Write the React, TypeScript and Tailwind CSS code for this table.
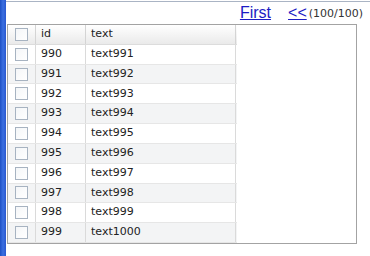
import React from 'react'

const rows = Array.from({ length: 10 }, (_, i) => ({ id: 990 + i, text: `text${991 + i}` }))

function CheckBox() {
  return <div className="w-[13px] h-[13px] border border-[#a7b3c1] bg-gradient-to-br from-[#f4f6f8] to-white" />
}

export default function App() {
  return (
    <div className="w-[370px] h-[256px] bg-white flex overflow-hidden" style={{ fontFamily: '"DejaVu Sans", Verdana, sans-serif' }}>
      {/* window edge */}
      <div className="w-[6px] h-full bg-gradient-to-r from-[#1d4fc4] via-[#3b6fe0] to-[#2a58cf]" />
      <div className="flex-1 flex flex-col">
        <div className="h-[2px] border-b border-[#aab4c4]" />
        {/* pager */}
        <div className="h-[22px] flex items-end justify-end pr-[7px] pb-[2px] gap-[17px]">
          <a className="text-[16px] leading-[18px] text-[#1c1cc4] underline" style={{ fontFamily: '"Liberation Sans", Arial, sans-serif' }}>
            First
          </a>
          <div className="flex items-end">
            <a className="text-[16px] leading-[18px] text-[#1c1cc4] underline" style={{ fontFamily: '"Liberation Sans", Arial, sans-serif' }}>
              &lt;&lt;
            </a>
            <span className="text-[11px] leading-[16px] text-[#333] ml-[2px]">(100/100)</span>
          </div>
        </div>
        {/* grid */}
        <div className="ml-[1px] w-[350px] h-[220px] border border-[#a3a3a3] flex flex-col">
          <div className="flex h-[20px] border-b border-[#dcdcdc] bg-gradient-to-b from-white to-[#eaeaea] text-[11px] text-[#222] w-[229px]">
            <div className="w-[28px] border-r border-[#d4d4d4] flex items-center justify-center">
              <CheckBox />
            </div>
            <div className="w-[50px] border-r border-[#d4d4d4] flex items-center pl-[5px]">id</div>
            <div className="w-[150px] border-r border-[#d4d4d4] flex items-center pl-[5px]">text</div>
          </div>
          {rows.map((r, i) => (
            <div
              key={r.id}
              className={`flex h-[20px] border-b border-[#e6e6e6] text-[11px] text-[#222] w-[229px] ${i % 2 === 1 ? 'bg-[#f3f4f5]' : 'bg-white'}`}
            >
              <div className="w-[28px] border-r border-[#dadada] flex items-center justify-center">
                <CheckBox />
              </div>
              <div className="w-[50px] border-r border-[#dadada] flex items-center pl-[5px]">{r.id}</div>
              <div className="w-[150px] border-r border-[#dadada] flex items-center pl-[5px]">{r.text}</div>
            </div>
          ))}
        </div>
      </div>
    </div>
  )
}
